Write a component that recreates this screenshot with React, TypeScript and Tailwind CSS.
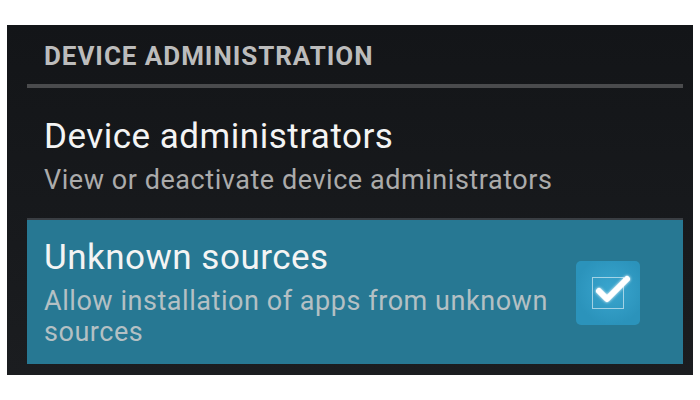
export default function App() {
  return (
    <div className="min-h-[400px] w-[700px] bg-white pt-[25px] font-['Roboto',sans-serif]">
      <div className="ml-[7px] h-[350px] w-[686px] bg-gradient-to-b from-[#131518] to-[#1b1d20] pl-[20px] pr-[10px] pt-[18px]">
        <div className="pl-[17px] text-[26px] font-bold leading-[26px] tracking-[0.95px] text-[#bcbcbc]">DEVICE ADMINISTRATION</div>
        <div className="mt-[15px] h-[4px] bg-[#4a4b4d]" />

        <div className="pl-[17px] pt-[31px] pb-[22px]">
          <div className="text-[35px] leading-[35px] tracking-[0.5px] text-[#f4f4f4]">Device administrators</div>
          <div className="mt-[11px] text-[27px] leading-[31px] tracking-[0.55px] text-[#ababab]">View or deactivate device administrators</div>
        </div>
        <div className="h-[2px] bg-[#3a3e43]" />

        <div className="flex items-center bg-[#277893] pl-[17px] pr-[43px] pt-[20px] pb-[16px]">
          <div className="flex-1 pr-[20px]">
            <div className="text-[35px] leading-[35px] tracking-[0.5px] text-[#f4f4f4]">Unknown sources</div>
            <div className="mt-[11px] text-[27px] leading-[31px] tracking-[0.55px] text-[#b4c0c4]">
              Allow installation of apps from unknown sources
            </div>
          </div>
          <div className="relative mb-[2px] h-[64px] w-[64px] rounded-[5px] bg-[radial-gradient(circle_at_55%_45%,#3aa6cf,#2b93bb_70%)]">
            <svg width="64" height="64" viewBox="0 0 64 64" className="absolute inset-0">
              <defs>
                <filter id="glow" x="-50%" y="-50%" width="200%" height="200%">
                  <feGaussianBlur stdDeviation="1.5" result="b" />
                  <feMerge>
                    <feMergeNode in="b" />
                    <feMergeNode in="SourceGraphic" />
                  </feMerge>
                </filter>
              </defs>
              <rect x="16.5" y="16.5" width="31" height="31" fill="none" stroke="rgba(255,255,255,0.55)" strokeWidth="1" />
              <polyline
                points="23,30 31,38 51,18"
                fill="none"
                stroke="#ffffff"
                strokeWidth="6"
                strokeLinecap="round"
                strokeLinejoin="round"
                filter="url(#glow)"
              />
            </svg>
          </div>
        </div>
      </div>
    </div>
  );
}
